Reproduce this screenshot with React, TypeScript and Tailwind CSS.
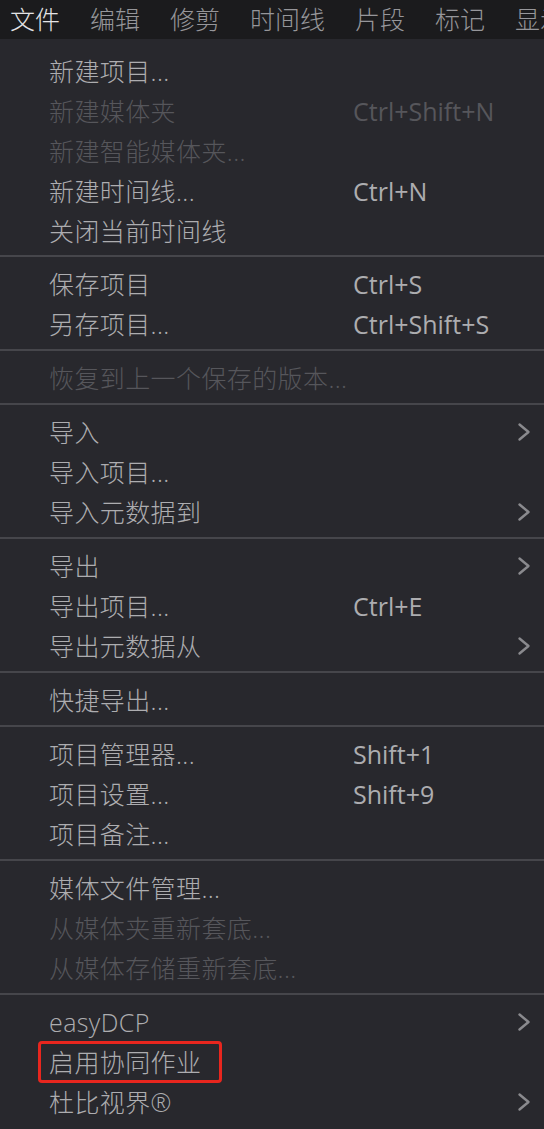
import React from "react";

type Item = {
  label: string;
  shortcut?: string;
  disabled?: boolean;
  submenu?: boolean;
  marked?: boolean;
};

const groups: Item[][] = [
  [
    { label: "新建项目..." },
    { label: "新建媒体夹", shortcut: "Ctrl+Shift+N", disabled: true },
    { label: "新建智能媒体夹...", disabled: true },
    { label: "新建时间线...", shortcut: "Ctrl+N" },
    { label: "关闭当前时间线" },
  ],
  [
    { label: "保存项目", shortcut: "Ctrl+S" },
    { label: "另存项目...", shortcut: "Ctrl+Shift+S" },
  ],
  [{ label: "恢复到上一个保存的版本...", disabled: true }],
  [
    { label: "导入", submenu: true },
    { label: "导入项目..." },
    { label: "导入元数据到", submenu: true },
  ],
  [
    { label: "导出", submenu: true },
    { label: "导出项目...", shortcut: "Ctrl+E" },
    { label: "导出元数据从", submenu: true },
  ],
  [{ label: "快捷导出..." }],
  [
    { label: "项目管理器...", shortcut: "Shift+1" },
    { label: "项目设置...", shortcut: "Shift+9" },
    { label: "项目备注..." },
  ],
  [
    { label: "媒体文件管理..." },
    { label: "从媒体夹重新套底...", disabled: true },
    { label: "从媒体存储重新套底...", disabled: true },
  ],
  [
    { label: "easyDCP", submenu: true },
    { label: "启用协同作业", marked: true },
    { label: "杜比视界®", submenu: true },
  ],
];

const menus = ["文件", "编辑", "修剪", "时间线", "片段", "标记", "显示"];

const Chevron = () => (
  <svg width="14" height="20" viewBox="0 0 14 20" fill="none">
    <polyline
      points="2.5,2.5 11.5,10 2.5,17.5"
      stroke="#8a8a8e"
      strokeWidth="2.4"
      strokeLinecap="round"
      strokeLinejoin="round"
    />
  </svg>
);

const MenuRow = ({ item }: { item: Item }) => {
  const color = item.disabled ? "text-[#56565b]" : "text-[#adadb0]";
  return (
    <div className={`relative flex h-10 items-center pl-[49px] pr-[13px] ${color}`}>
      <span className="w-[304px] whitespace-nowrap tracking-[0.4px] font-light">{item.label}</span>
      <span className="flex-1 whitespace-nowrap font-normal">{item.shortcut}</span>
      {item.submenu ? <Chevron /> : null}
      {item.marked ? (
        <div className="absolute left-[38px] top-[-1px] h-[42px] w-[184px] rounded-[4px] border-[3px] border-[#e8261e]" />
      ) : null}
    </div>
  );
};

export default function App() {
  return (
    <div
      className="h-[1129px] w-[544px] overflow-hidden bg-[#28282d] text-[25px] leading-none"
      style={{ fontFamily: "'Open Sans', 'Noto Sans CJK SC', sans-serif" }}
    >
      <div className="flex h-[39px] items-center gap-[30px] overflow-hidden whitespace-nowrap bg-[#1b1b1d] pl-[10px] font-light">
        {menus.map((m, idx) => (
          <span key={m} className={idx == 0 ? "shrink-0 text-[#e4e4e6]" : "shrink-0 text-[#96969a]"}>
            {m}
          </span>
        ))}
      </div>
      {groups.map((g, gi) => (
        <div
          key={gi}
          className={
            gi == 0
              ? "pt-[12px] pb-[4px]"
              : "border-t-2 border-[#46464b] pt-[7px] pb-[5px]"
          }
        >
          {g.map((item) => (
            <MenuRow key={item.label} item={item} />
          ))}
        </div>
      ))}
    </div>
  );
}
